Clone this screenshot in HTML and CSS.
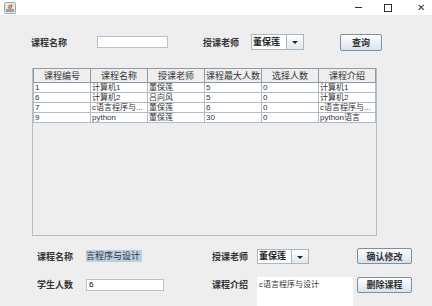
FILE: index.html
```html
<!DOCTYPE html>
<html lang="zh">
  <head>
    <meta charset="UTF-8" />
    <title>课程管理</title>
    <link rel="stylesheet" href="styles.css">
  </head>
  <body>
    <!-- Заголовок окна -->
    <div class="titlebar">
      <svg class="app-icon" width="12" height="12" viewBox="0 0 12 12">
        <rect x="0.5" y="0.5" width="11" height="11" rx="1" fill="#dfe6ee" stroke="#9aa8b8" />
        <rect x="2" y="7" width="8" height="3" fill="#8fa3bb" />
        <circle cx="6" cy="5" r="2.2" fill="#f08a3a" />
        <circle cx="7.5" cy="3.5" r="1" fill="#e5533a" />
      </svg>
      <div class="win-controls">
        <span class="ctl ctl-min"></span>
        <span class="ctl ctl-max"></span>
        <span class="ctl ctl-close">✕</span>
      </div>
    </div>

    <!-- Строка поиска -->
    <div class="search">
      <span class="label search-label">课程名称</span>
      <input class="field search-field" type="text" />
      <span class="label teacher-label">授课老师</span>
      <div class="combo">
        <span class="combo-value">董保莲</span>
        <span class="combo-arrow"></span>
      </div>
      <button class="btn query-btn">查询</button>
    </div>

    <!-- Таблица курсов -->
    <div class="scroll">
      <table class="grid">
        <thead>
          <tr>
            <th>课程编号</th>
            <th>课程名称</th>
            <th>授课老师</th>
            <th>课程最大人数</th>
            <th>选择人数</th>
            <th>课程介绍</th>
          </tr>
        </thead>
        <tbody>
          <tr><td>1</td><td>计算机1</td><td>董保莲</td><td>5</td><td>0</td><td>计算机1</td></tr>
          <tr><td>6</td><td>计算机2</td><td>吕向风</td><td>5</td><td>0</td><td>计算机2</td></tr>
          <tr><td>7</td><td>c语言程序与...</td><td>董保莲</td><td>6</td><td>0</td><td>c语言程序与...</td></tr>
          <tr><td>9</td><td>python</td><td>董保莲</td><td>30</td><td>0</td><td>python语言</td></tr>
        </tbody>
      </table>
    </div>

    <!-- Форма редактирования -->
    <div class="edit">
      <span class="label">课程名称</span>
      <div class="name-view"><span class="selected">言程序与设计</span></div>
      <span class="label">授课老师</span>
      <div class="combo edit-combo">
        <span class="combo-value">董保莲</span>
        <span class="combo-arrow"></span>
      </div>
      <button class="btn">确认修改</button>

      <span class="label">学生人数</span>
      <input class="field count-field" type="text" value="6" />
      <span class="label">课程介绍</span>
      <div class="intro">c语言程序与设计</div>
      <button class="btn">删除课程</button>
    </div>
  </body>
</html>
```

FILE: styles.css
```css
/* Сброс отступов */
* {
  margin: 0;
  padding: 0;
  box-sizing: border-box;
}

body {
  width: 432px;
  height: 306px;
  overflow: hidden;
  background: #eeeeee;
  font-family: "Liberation Sans", "Noto Sans CJK SC", sans-serif;
  font-size: 9px;
  color: #333;
}

/* Заголовок окна */
.titlebar {
  height: 15px;
  background: #fff;
  display: flex;
  align-items: center;
  padding-left: 4px;
}

.win-controls {
  margin-left: auto;
  display: flex;
  align-items: center;
  height: 15px;
}

.ctl {
  display: block;
  color: #333;
}

.ctl-min {
  width: 7px;
  height: 1px;
  background: #333;
  margin-right: 22px;
}

.ctl-max {
  width: 8px;
  height: 8px;
  border: 1px solid #333;
  margin-right: 25px;
}

.ctl-close {
  font-size: 10px;
  line-height: 10px;
  margin-right: 7px;
}

/* Подписи полей */
.label {
  font-weight: bold;
  color: #333;
  font-size: 9px;
  white-space: nowrap;
}

.field {
  height: 12px;
  background: #fff;
  border: 1px solid #b8c2cc;
  font: inherit;
  font-size: 8px;
  padding: 0 2px;
  outline: none;
}

/* Строка поиска */
.search {
  display: flex;
  align-items: center;
  height: 18px;
  margin-top: 18px;
  padding-left: 31px;
}

.search-label {
  width: 66px;
}

.search-field {
  width: 71px;
}

.teacher-label {
  width: 48px;
  margin-left: 35px;
}

/* Выпадающий список */
.combo {
  display: flex;
  width: 53px;
  height: 16px;
  border: 1px solid #a9b6c4;
  background: #fff;
}

.combo-value {
  flex: 1;
  font-weight: bold;
  font-size: 9px;
  line-height: 14px;
  padding-left: 1px;
  color: #222;
  border-right: 1px solid #a9b6c4;
}

.combo-arrow {
  width: 16px;
  background: linear-gradient(#ffffff, #dfe7ef);
  position: relative;
}

.combo-arrow::after {
  content: "";
  position: absolute;
  left: 5px;
  top: 6px;
  border-left: 3px solid transparent;
  border-right: 3px solid transparent;
  border-top: 3px solid #222;
}

/* Кнопки */
.btn {
  height: 17px;
  border: 1px solid #7f8f9f;
  border-radius: 2px;
  background: linear-gradient(#ffffff, #d6e2ee);
  font: inherit;
  font-weight: bold;
  font-size: 9px;
  color: #333;
}

.query-btn {
  width: 42px;
  margin-left: 36px;
}

/* Таблица */
.scroll {
  width: 345px;
  height: 168px;
  margin: 17px 0 0 32px;
  border: 1px solid #b4bdc7;
  border-top: none;
}

.grid {
  width: 100%;
  table-layout: fixed;
  border-collapse: collapse;
}

.grid th {
  height: 13px;
  font-weight: normal;
  font-size: 9px;
  color: #333;
  background: #eeeeee;
  border: 1px solid #8e9aa8;
  overflow: hidden;
  white-space: nowrap;
}

.grid td {
  height: 10px;
  line-height: 9px;
  padding: 0 1px;
  font-size: 8px;
  background: #fff;
  border: 1px solid #b0bccb;
  overflow: hidden;
  white-space: nowrap;
}

/* Форма редактирования */
.edit {
  display: grid;
  grid-template-columns: 49px 126px 45px 100px 55px;
  grid-template-rows: 16px 17px;
  row-gap: 12px;
  align-items: center;
  margin-top: 12px;
  padding-left: 37px;
}

.name-view {
  height: 12px;
  line-height: 12px;
}

.selected {
  display: inline-block;
  width: 56px;
  background: #b8cfe5;
  font-size: 9px;
  color: #333;
}

.edit-combo {
  width: 52px;
  height: 15px;
}

.edit-combo .combo-value {
  line-height: 13px;
}

.count-field {
  width: 78px;
}

.intro {
  align-self: start;
  margin-top: 1px;
  width: 96px;
  height: 30px;
  background: #fff;
  font-size: 8px;
  padding: 1px 2px;
  color: #333;
}

.edit .btn {
  width: 55px;
  height: 16px;
}
```
